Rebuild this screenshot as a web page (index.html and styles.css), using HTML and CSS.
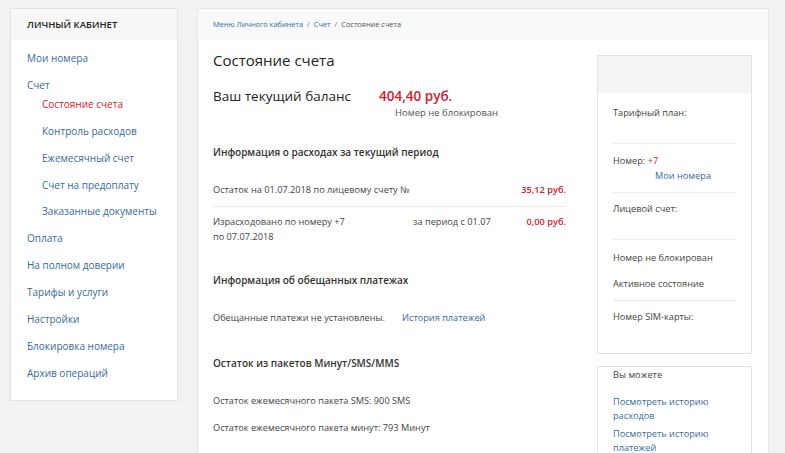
FILE: index.html
```html
<!DOCTYPE html>
<html lang="ru">

<head>
    <meta charset="UTF-8">
    <meta name="viewport" content="width=device-width, initial-scale=1.0">
    <title>Состояние счета</title>
    <link rel="stylesheet" href="styles.css">
</head>

<body>
    <div class="page">
        <aside class="sidebar">
            <div class="sidebar-head">Личный кабинет</div>
            <ul class="menu">
                <li><a href="#">Мои номера</a></li>
                <li><a href="#">Счет</a>
                    <ul class="submenu">
                        <li><a href="#" class="active">Состояние счета</a></li>
                        <li><a href="#">Контроль расходов</a></li>
                        <li><a href="#">Ежемесячный счет</a></li>
                        <li><a href="#">Счет на предоплату</a></li>
                        <li><a href="#">Заказанные документы</a></li>
                    </ul>
                </li>
                <li><a href="#">Оплата</a></li>
                <li><a href="#">На полном доверии</a></li>
                <li><a href="#">Тарифы и услуги</a></li>
                <li><a href="#">Настройки</a></li>
                <li><a href="#">Блокировка номера</a></li>
                <li><a href="#">Архив операций</a></li>
            </ul>
        </aside>

        <main class="main">
            <div class="crumbs">
                <a href="#">Меню Личного кабинета</a><span class="sep">/</span><a href="#">Счет</a><span class="sep">/</span><span>Состояние счета</span>
            </div>
            <div class="main-body">
                <div class="content">
                    <h1>Состояние счета</h1>
                    <div class="balance">
                        <span class="balance-label">Ваш текущий баланс</span>
                        <span class="balance-sum">404,40 руб.</span>
                    </div>
                    <div class="balance-note">Номер не блокирован</div>

                    <h2>Информация о расходах за текущий период</h2>
                    <div class="row row-line">
                        <span class="row-text">Остаток на 01.07.2018 по лицевому счету №</span>
                        <span class="sum">35,12 руб.</span>
                    </div>
                    <div class="row row-two">
                        <span class="row-text">Израсходовано по номеру +7<br>по 07.07.2018</span>
                        <span class="row-mid">за период с 01.07</span>
                        <span class="sum">0,00 руб.</span>
                    </div>

                    <h2>Информация об обещанных платежах</h2>
                    <div class="row row-end">
                        <span class="row-text promise">Обещанные платежи не установлены.</span>
                        <a href="#">История платежей</a>
                    </div>

                    <h2>Остаток из пакетов Минут/SMS/MMS</h2>
                    <div class="row">Остаток ежемесячного пакета SMS: 900 SMS</div>
                    <div class="row">Остаток ежемесячного пакета минут: 793 Минут</div>
                </div>

                <div class="side">
                    <div class="box">
                        <div class="box-head"></div>
                        <div class="box-body">
                            <div class="item item-line item-plan">Тарифный план:</div>
                            <div class="item item-line item-num">
                                <div>Номер: <span class="red">+7</span></div>
                                <a href="#" class="num-link">Мои номера</a>
                            </div>
                            <div class="item item-line item-acc">Лицевой счет:</div>
                            <div class="item item-block">Номер не блокирован</div>
                            <div class="item item-line item-state">Активное состояние</div>
                            <div class="item item-sim">Номер SIM-карты:</div>
                        </div>
                    </div>
                    <div class="box box-can">
                        <div class="can-title">Вы можете</div>
                        <a href="#">Посмотреть историю расходов</a>
                        <a href="#">Посмотреть историю платежей</a>
                    </div>
                </div>
            </div>
        </main>
    </div>
</body>

</html>
```

FILE: styles.css
```css
* {
    margin: 0;
    padding: 0;
    box-sizing: border-box;
}

body {
    background-color: #f2f2f2;
    font-family: "Open Sans", "Noto Sans", sans-serif;
    color: #333;
    font-size: 10px;
    overflow: hidden;
}

a {
    color: #376b99;
    text-decoration: none;
}

.page {
    display: flex;
    align-items: flex-start;
    gap: 19px;
    padding: 8px 0 0 10px;
    height: 453px;
}

/* левое меню */
.sidebar {
    width: 168px;
    background-color: #fff;
    border: 1px solid #e2e2e2;
}

.sidebar-head {
    height: 31px;
    line-height: 31px;
    padding-left: 16px;
    background-color: #f7f7f7;
    font-size: 9.5px;
    font-weight: 600;
    color: #222;
    text-transform: uppercase;
}

.menu {
    list-style: none;
    padding: 5px 0 14px 16px;
}

.menu a {
    display: block;
    line-height: 26.85px;
    font-size: 10px;
}

.submenu {
    list-style: none;
    padding-left: 15px;
    margin-top: -7.6px;
}

.menu a.active {
    color: #cf2030;
}

/* основная часть */
.main {
    width: 572px;
    height: 460px;
    background-color: #fff;
    border: 1px solid #e6e6e6;
}

.crumbs {
    height: 31px;
    line-height: 31px;
    padding-left: 15px;
    background-color: #f8f9f9;
    font-size: 7.4px;
    color: #555;
}

.crumbs .sep {
    margin: 0 4px;
    color: #777;
}

.main-body {
    display: flex;
    gap: 31px;
    padding: 0 15px 0 15px;
}

.content {
    width: 353px;
}

h1 {
    font-size: 15px;
    font-weight: 400;
    color: #222;
    line-height: 20px;
    margin-top: 10px;
}

.balance {
    display: flex;
    margin-top: 17px;
    line-height: 18px;
    font-size: 13.5px;
    color: #222;
}

.balance-label {
    width: 166px;
}

.balance-sum {
    color: #cf2030;
    font-weight: 600;
}

.balance-note {
    padding-left: 182px;
    padding-bottom: 6px;
    font-size: 9.5px;
    color: #555;
    line-height: 16px;
}

h2 {
    font-size: 10px;
    font-weight: 600;
    color: #333;
    line-height: 16px;
    margin-top: 17px;
    margin-bottom: 16px;
}

.row {
    display: flex;
    line-height: 15px;
    font-size: 9.2px;
    color: #444;
    padding: 6px 0;
}

.row-line {
    border-bottom: 1px solid #ececec;
    padding-bottom: 9px;
}

.row-two {
    padding-top: 6.5px;
    padding-bottom: 11px;
}

.row-end {
    padding-bottom: 13px;
}

.row-text {
    flex: 1;
}

.row-two .row-text {
    flex: 0 0 200px;
}

.row-mid {
    flex: 1;
}

.promise {
    flex: 0 0 189px;
}

.sum {
    color: #cf2030;
    font-weight: 600;
}

/* правая колонка */
.side {
    width: 155px;
    padding-top: 15px;
}

.box {
    border: 1px solid #e2e2e2;
    background-color: #fff;
}

.box-head {
    height: 37px;
    background-color: #f5f5f5;
}

.box-body {
    padding: 0 15px 29px;
}

.item {
    font-size: 9.2px;
    color: #444;
    line-height: 15px;
}

.item-line {
    border-bottom: 1px solid #ececec;
}

.item-plan {
    padding: 12px 0 22.5px;
}

.item-num {
    padding: 9.5px 0 8.5px;
}

.num-link {
    display: block;
    padding-left: 42px;
}

.item-acc {
    padding: 8.5px 0 22.5px;
}

.item-block {
    padding: 10.5px 0 0;
}

.item-state {
    padding: 11px 0 8.5px;
}

.item-sim {
    padding: 8px 0 0;
}

.red {
    color: #cf2030;
}

.box-can {
    margin-top: 12px;
    padding: 0 15px 0;
    height: 100px;
    font-size: 9.2px;
}

.can-title {
    line-height: 15px;
    color: #444;
    margin-bottom: 13.5px;
}

.box-can a {
    display: block;
    line-height: 14px;
    margin-bottom: 4px;
    width: 100px;
}
```
